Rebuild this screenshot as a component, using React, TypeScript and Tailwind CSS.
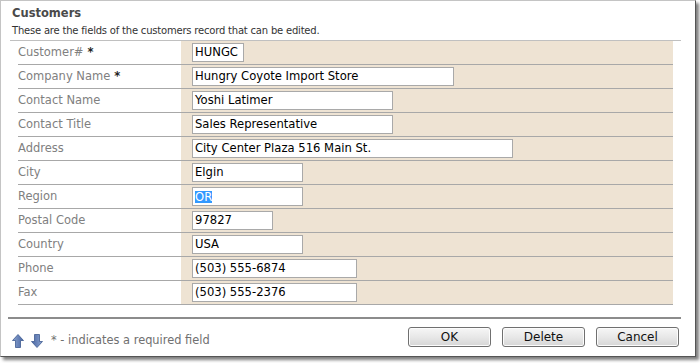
const fields = [
  { label: "Customer#", value: "HUNGC", width: 52, required: true },
  { label: "Company Name", value: "Hungry Coyote Import Store", width: 262, required: true },
  { label: "Contact Name", value: "Yoshi Latimer", width: 201 },
  { label: "Contact Title", value: "Sales Representative", width: 201 },
  { label: "Address", value: "City Center Plaza 516 Main St.", width: 321 },
  { label: "City", value: "Elgin", width: 111 },
  { label: "Region", value: "OR", width: 111, selected: true },
  { label: "Postal Code", value: "97827", width: 81 },
  { label: "Country", value: "USA", width: 111 },
  { label: "Phone", value: "(503) 555-6874", width: 165 },
  { label: "Fax", value: "(503) 555-2376", width: 165 },
];

function ArrowIcon({ down }: { down?: boolean }) {
  return (
    <svg width="12" height="14" viewBox="0 0 12 14" className={down ? "rotate-180" : ""}>
      <defs>
        <linearGradient id={down ? "gd" : "gu"} x1="0" y1="0" x2="1" y2="0">
          <stop offset="0" stopColor="#8aa2cf" />
          <stop offset="1" stopColor="#4a67a3" />
        </linearGradient>
      </defs>
      <path
        d="M6 0.5 L11.5 6.5 L8.5 6.5 L8.5 13.5 L3.5 13.5 L3.5 6.5 L0.5 6.5 Z"
        fill={`url(#${down ? "gd" : "gu"})`}
        stroke="#3f5a91"
        strokeWidth="0.8"
        strokeLinejoin="round"
      />
    </svg>
  );
}

function Button({ children }: { children: string }) {
  return (
    <button className="w-[83px] h-[20px] rounded-[3px] border border-[#707070] bg-gradient-to-b from-[#f6f6f6] via-[#e8e8e8] to-[#d6d6d6] text-[12px] text-[#111] leading-none shadow-[inset_0_0_0_1px_#fcfcfc]">
      {children}
    </button>
  );
}

export default function App() {
  return (
    <div className="w-[700px] h-[363px] bg-white font-['DejaVu_Sans',sans-serif]">
      <div className="w-[696px] h-[357px] border border-[#c4c4c4] border-r-[#555] border-b-[#555] bg-white shadow-[3px_3px_3px_rgba(0,0,0,0.5)] flex flex-col">
        <div className="h-[39px] pl-[11px] pt-[4px]">
          <div className="text-[11.5px] font-bold leading-[17px] text-[#4a4a4a]">Customers</div>
          <div className="text-[10px] leading-[17px] text-[#333] tracking-[-0.2px]">
            These are the fields of the customers record that can be edited.
          </div>
        </div>
        <div className="ml-[9px] mr-[14px] border-t border-[#c0c0c0]" />
        <div className="ml-[17px] mr-[22px]">
          {fields.map((f) => (
            <div key={f.label} className="flex h-[24px] border-b border-[#a8a8a8]">
              <div className="w-[163px] flex items-center text-[11.5px] text-[#808080]">
                {f.label}
                {f.required && <span className="ml-[4px] text-[#222] font-bold">*</span>}
              </div>
              <div className="flex-1 bg-[#eee3d3] flex items-center pl-[11px]">
                <div
                  className="h-[19px] border border-[#a9a9a9] bg-white flex items-center pl-[2px] text-[11.6px] text-black whitespace-nowrap overflow-hidden"
                  style={{ width: f.width }}
                >
                  {f.selected ? (
                    <span className="bg-[#3399ff] text-white leading-[12px]">{f.value}</span>
                  ) : (
                    f.value
                  )}
                </div>
              </div>
            </div>
          ))}
        </div>
        <div className="mt-[12px] ml-[7px] mr-[14px] border-t-2 border-[#8c8c8c]" />
        <div className="flex items-center h-[28px] mt-[8px] pl-[11px] pr-[16px]">
          <ArrowIcon />
          <div className="w-[7px]" />
          <ArrowIcon down />
          <span className="ml-[8px] text-[11.4px] text-[#707070]">* - indicates a required field</span>
          <div className="flex-1" />
          <div className="flex gap-[11px] self-start">
            <Button>OK</Button>
            <Button>Delete</Button>
            <Button>Cancel</Button>
          </div>
        </div>
      </div>
    </div>
  );
}
